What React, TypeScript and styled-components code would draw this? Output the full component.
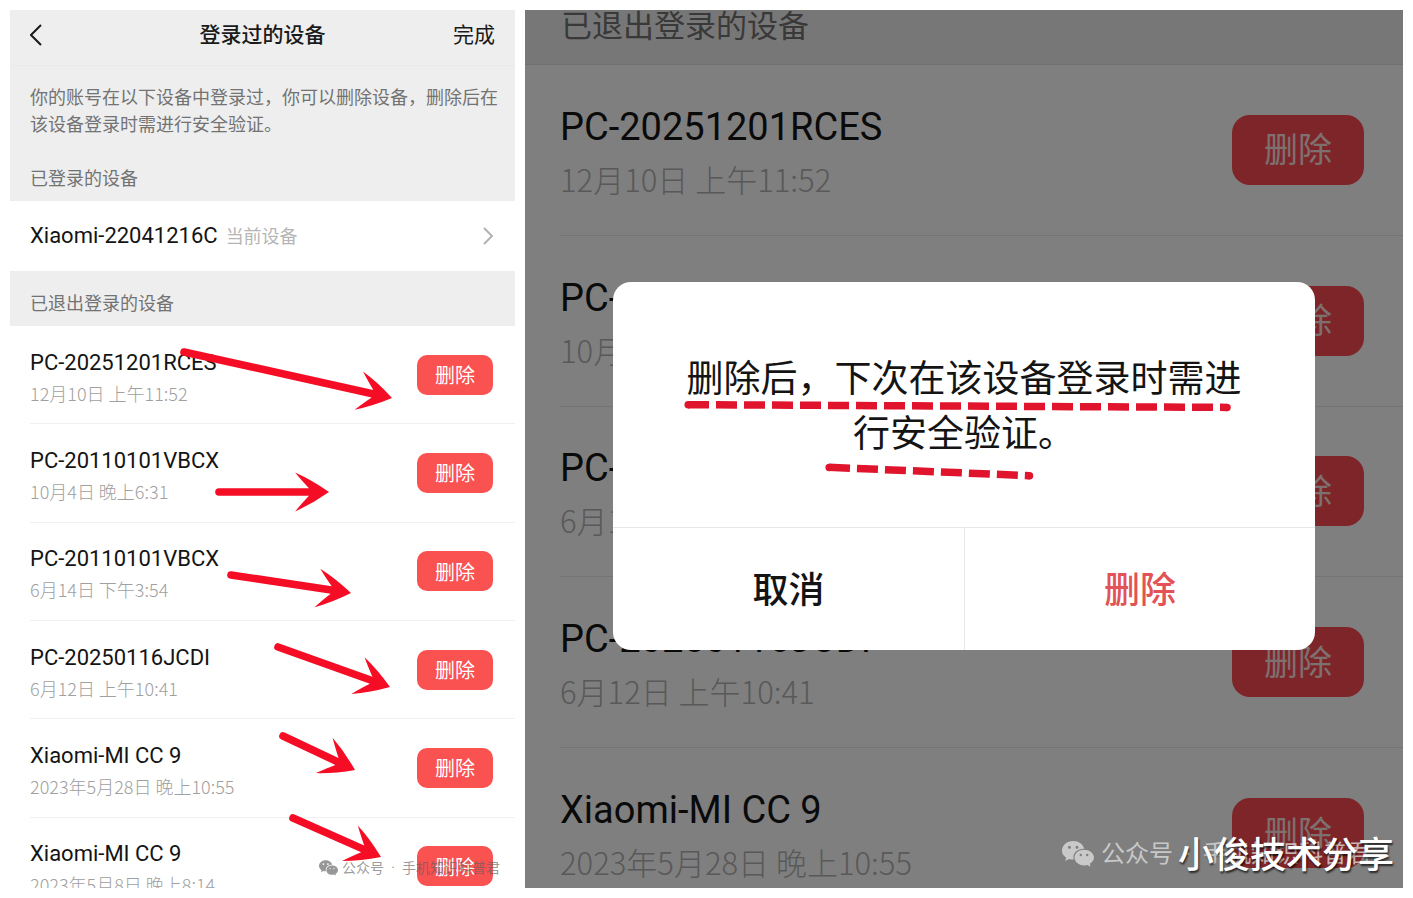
import React from "react";
import styled, { createGlobalStyle, css } from "styled-components";

const GlobalStyle = createGlobalStyle`
  * { box-sizing: border-box; }
  body {
    margin: 0;
    background: #ffffff;
    font-family: Roboto, "Noto Sans CJK SC", sans-serif;
  }
  button { font-family: inherit; border: 0; cursor: pointer; }
  h1, h2, p, ul { margin: 0; padding: 0; }
  ul { list-style: none; }
`;

const Page = styled.main`
  display: grid;
  grid-template-columns: 505fr 878fr;
  grid-template-rows: minmax(0, 1fr);
  gap: 10px;
  height: 100vh;
  padding: 10px;
`;

const Panel = styled.section`
  position: relative;
  display: flex;
  flex-direction: column;
  overflow: hidden;
  background: #ffffff;
`;

const TopBar = styled.header`
  display: grid;
  grid-template-columns: 1fr auto 1fr;
  align-items: center;
  flex: none;
  height: 56px;
  padding: 0 20px 6px;
  background: #eeeeee;
  border-bottom: 1px solid #e9e9e9;
  color: #1a1a1a;
`;

const Title = styled.h1`
  font-size: 21px;
  line-height: 32px;
  font-weight: 500;
`;

const BackButton = styled.button`
  justify-self: start;
  display: flex;
  padding: 0;
  background: none;
  color: inherit;
`;

const DoneButton = styled.button`
  justify-self: end;
  padding: 0;
  background: none;
  color: inherit;
  font-size: 21px;
  line-height: 32px;
`;

const Intro = styled.p`
  flex: none;
  height: 80px;
  padding: 18px 12px 0 20px;
  background: #eeeeee;
  color: #737373;
  font-size: 18px;
  line-height: 27px;
`;

const SectionLabel = styled.h2<{ $large?: boolean }>`
  flex: none;
  display: flex;
  align-items: center;
  background: #eeeeee;
  color: #737373;
  font-weight: 400;
  ${({ $large }) =>
    $large
      ? css`
          height: 55px;
          padding: 0 36px 22px;
          font-size: 31px;
          line-height: 31px;
          border-bottom: 1px solid #e2e2e2;
        `
      : css`
          height: 55px;
          padding: 9px 20px 0;
          font-size: 18px;
          line-height: 27px;
        `}
`;

const CurrentDevice = styled.a`
  flex: none;
  display: flex;
  align-items: center;
  gap: 8px;
  height: 70px;
  padding: 0 21px 0 20px;
  color: #1a1a1a;
  text-decoration: none;
`;

const List = styled.ul<{ $large?: boolean }>`
  flex: none;
  display: grid;
  grid-auto-rows: 1fr;
  height: ${({ $large }) => ($large ? 854 : 590)}px;
`;

const DeviceName = styled.span<{ $large?: boolean }>`
  color: #141414;
  white-space: nowrap;
  font-size: ${({ $large }) => ($large ? 38 : 22)}px;
  line-height: ${({ $large }) => ($large ? 54 : 32)}px;
`;

const Tag = styled.span`
  flex: 1;
  color: #b5b5b5;
  font-size: 18px;
  line-height: 27px;
`;

const DeviceItem = styled.li<{ $large?: boolean }>`
  display: flex;
  align-items: center;
  justify-content: space-between;
  border-bottom: 1px solid #f0f0f0;
  ${({ $large }) =>
    $large
      ? css`
          margin-left: 35px;
          padding-right: 39px;
          border-color: #e8e8e8;
        `
      : css`
          margin-left: 20px;
          padding-right: 22px;
        `}
`;

const DeviceText = styled.div`
  display: flex;
  flex-direction: column;
  padding-top: 4px;
`;

const DeviceTime = styled.time<{ $large?: boolean }>`
  white-space: nowrap;
  font-family: "Noto Sans CJK SC", sans-serif;
  font-weight: 300;
  color: ${({ $large }) => ($large ? "#b2b2b2" : "#a0a0a0")};
  font-size: ${({ $large }) => ($large ? 31 : 18)}px;
  line-height: ${({ $large }) => ($large ? 50 : 28)}px;
`;

const DeleteButton = styled.button<{ $large?: boolean }>`
  flex: none;
  padding: 0;
  background: #fa5151;
  color: #ffffff;
  ${({ $large }) =>
    $large
      ? css`
          width: 132px;
          height: 70px;
          padding-bottom: 4px;
          border-radius: 18px;
          font-size: 34px;
          background: #fa4b50;
          color: #ffe0e0;
        `
      : css`
          width: 76px;
          height: 40px;
          border-radius: 10px;
          font-size: 20px;
        `}
`;

const Backdrop = styled.div`
  position: absolute;
  inset: 0;
  display: flex;
  align-items: center;
  justify-content: center;
  padding-top: 34px;
  background: rgba(0, 0, 0, 0.5);
`;

const Dialog = styled.div`
  position: relative;
  width: 80%;
  overflow: hidden;
  border-radius: 18px;
  background: #ffffff;
`;

const DialogMessage = styled.p`
  padding: 70px 64px 65px;
  color: #141414;
  font-size: 37px;
  line-height: 55px;
  text-align: center;
`;

const DialogActions = styled.div`
  display: grid;
  grid-template-columns: 1fr 1fr;
  border-top: 1px solid #e8e8e8;
`;

const DialogButton = styled.button<{ $danger?: boolean }>`
  height: 122px;
  padding: 0 0 4px;
  background: none;
  color: ${({ $danger }) => ($danger ? "#e25256" : "#141414")};
  border-left: ${({ $danger }) => ($danger ? "1px solid #e8e8e8" : "0")};
  font-size: 36px;
  font-weight: 500;
`;

const Marks = styled.svg`
  position: absolute;
  top: 0;
  left: 0;
  overflow: visible;
  pointer-events: none;
`;

const Watermark = styled.div<{ $large?: boolean }>`
  position: absolute;
  display: flex;
  align-items: center;
  white-space: nowrap;
  pointer-events: none;
  ${({ $large }) =>
    $large
      ? css`
          right: 32px;
          bottom: 16px;
          gap: 7px;
          color: rgba(225, 225, 225, 0.75);
          font-size: 24px;
          line-height: 36px;
        `
      : css`
          right: 15px;
          bottom: 10px;
          gap: 4px;
          color: rgba(95, 95, 95, 0.65);
          font-size: 14px;
          line-height: 20px;
        `}
`;

const Dot = styled.span<{ $large?: boolean }>`
  text-align: center;
  width: ${({ $large }) => ($large ? 16 : 10)}px;
`;

const Signature = styled.p`
  position: absolute;
  right: 9px;
  bottom: 8px;
  color: #ffffff;
  font-size: 36px;
  line-height: 48px;
  font-weight: 500;
  text-shadow: 1px 2px 2px rgba(0, 0, 0, 0.7);
  white-space: nowrap;
`;

type Device = { name: string; time: string };

const devices: Device[] = [
  { name: "PC-20251201RCES", time: "12月10日 上午11:52" },
  { name: "PC-20110101VBCX", time: "10月4日 晚上6:31" },
  { name: "PC-20110101VBCX", time: "6月14日 下午3:54" },
  { name: "PC-20250116JCDI", time: "6月12日 上午10:41" },
  { name: "Xiaomi-MI CC 9", time: "2023年5月28日 晚上10:55" },
  { name: "Xiaomi-MI CC 9", time: "2023年5月8日 晚上8:14" },
];

function DeviceList({ items, large }: { items: Device[]; large?: boolean }) {
  return (
    <List $large={large}>
      {items.map((device, i) => (
        <DeviceItem key={i} $large={large}>
          <DeviceText>
            <DeviceName $large={large}>{device.name}</DeviceName>
            <DeviceTime $large={large}>{device.time}</DeviceTime>
          </DeviceText>
          <DeleteButton type="button" $large={large}>删除</DeleteButton>
        </DeviceItem>
      ))}
    </List>
  );
}

/* Tail and tip of each arrow, in panel coordinates. */
const arrows = [
  [174, 342, 382, 388],
  [209, 482, 319, 482],
  [221, 565, 341, 583],
  [268, 637, 380, 677],
  [273, 726, 345, 760],
  [283, 808, 371, 847],
];

function Arrow({ from }: { from: number[] }) {
  const [x1, y1, x2, y2] = from;
  const len = Math.hypot(x2 - x1, y2 - y1);
  const angle = (Math.atan2(y2 - y1, x2 - x1) * 180) / Math.PI;
  return (
    <g transform={`translate(${x2} ${y2}) rotate(${angle})`}>
      <path
        d={`M${-len} -3.8 L-20 -3.8 Q-26 -10 -34 -19.5 Q-17 -12 0 0 Q-17 12 -34 19.5 Q-26 10 -20 3.8 L${-len} 3.8 A3.8 3.8 0 0 1 ${-len} -3.8Z`}
        fill="#f50d25"
      />
    </g>
  );
}

function WeChatIcon({ width, height }: { width: number; height: number }) {
  return (
    <svg width={width} height={height} viewBox="0 0 32 26" fill="currentColor" aria-hidden="true">
      <path
        fillRule="evenodd"
        d="M11.2 0C5 0 0 4.200 0 9.400c0 3 1.600 5.600 4.200 7.300L3.200 20l3.900-2c1.300.4 2.700.6 4.100.6h.6c-.3-.8-.4-1.600-.4-2.400 0-4.700 4.500-8.500 10-8.500h.8C21.200 3.300 16.700 0 11.200 0ZM7.400 4.800a1.500 1.500 0 1 1 0 3 1.500 1.500 0 0 1 0-3Zm7.600 0a1.500 1.500 0 1 1 0 3 1.500 1.500 0 0 1 0-3Z"
      />
      <path
        fillRule="evenodd"
        d="M22 8.700c-5.300 0-9.500 3.500-9.500 7.900s4.200 7.900 9.500 7.900c1.200 0 2.300-.2 3.400-.5l3.200 1.700-.8-2.900c2.500-1.500 4.200-3.700 4.200-6.200 0-4.400-4.600-7.900-10-7.900Zm-3.200 4.100a1.200 1.200 0 1 1 0 2.400 1.200 1.200 0 0 1 0-2.400Zm6.400 0a1.200 1.200 0 1 1 0 2.400 1.200 1.200 0 0 1 0-2.400Z"
      />
    </svg>
  );
}

function AccountMark({ large }: { large?: boolean }) {
  return (
    <Watermark $large={large}>
      <WeChatIcon width={large ? 32 : 19} height={large ? 26 : 16} />
      <span>公众号</span>
      <Dot $large={large}>·</Dot>
      <span>手机知识科普君</span>
    </Watermark>
  );
}

export default function App() {
  return (
    <>
      <GlobalStyle />
      <Page>
        <Panel>
          <TopBar>
            <BackButton type="button" aria-label="返回">
              <svg width="12" height="22" viewBox="0 0 12 22" fill="none" stroke="currentColor" strokeWidth="2">
                <path d="M11 1 1 11l10 10" />
              </svg>
            </BackButton>
            <Title>登录过的设备</Title>
            <DoneButton type="button">完成</DoneButton>
          </TopBar>
          <Intro>你的账号在以下设备中登录过，你可以删除设备，删除后在该设备登录时需进行安全验证。</Intro>
          <SectionLabel>已登录的设备</SectionLabel>
          <CurrentDevice href="#">
            <DeviceName>Xiaomi-22041216C</DeviceName>
            <Tag>当前设备</Tag>
            <svg width="11" height="18" viewBox="0 0 11 18" fill="none" stroke="#b2b2b2" strokeWidth="2" aria-hidden="true">
              <path d="m1 1 8 8-8 8" />
            </svg>
          </CurrentDevice>
          <SectionLabel>已退出登录的设备</SectionLabel>
          <DeviceList items={devices} />
          <Marks width="505" height="878" viewBox="0 0 505 878" aria-hidden="true">
            {arrows.map((a, i) => (
              <Arrow key={i} from={a} />
            ))}
          </Marks>
          <AccountMark />
        </Panel>

        <Panel>
          <SectionLabel $large>已退出登录的设备</SectionLabel>
          <DeviceList items={devices.slice(0, 5)} large />
          <Backdrop>
            <Dialog role="dialog" aria-modal="true" aria-label="删除设备">
              <DialogMessage>删除后，下次在该设备登录时需进行安全验证。</DialogMessage>
              <DialogActions>
                <DialogButton type="button">取消</DialogButton>
                <DialogButton type="button" $danger>删除</DialogButton>
              </DialogActions>
              <Marks width="702" height="245" viewBox="0 0 702 245" aria-hidden="true">
                <g stroke="#e0142c" strokeWidth="7.500" strokeDasharray="21 7">
                  <path d="M75 122.700 614 125.400" />
                  <path d="M216 185.300 417 193.700" />
                </g>
                <g fill="#e0142c">
                  <circle cx="75.200" cy="122.700" r="3.750" />
                  <circle cx="614" cy="125.400" r="3.750" />
                  <circle cx="216.200" cy="185.400" r="3.750" />
                  <circle cx="416.500" cy="193.700" r="3.750" />
                </g>
              </Marks>
            </Dialog>
          </Backdrop>
          <AccountMark large />
          <Signature>小俊技术分享</Signature>
        </Panel>
      </Page>
    </>
  );
}
